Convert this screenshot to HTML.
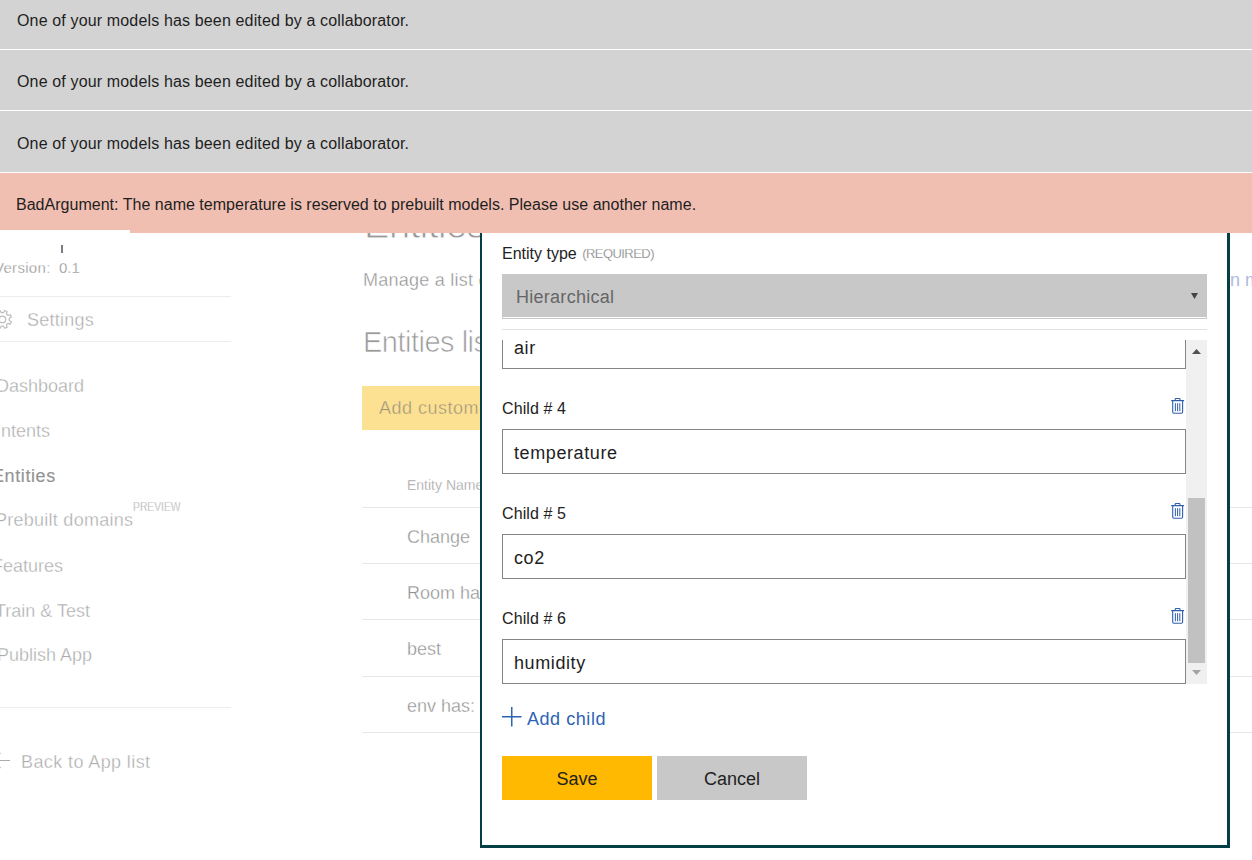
<!DOCTYPE html>
<html><head><meta charset="utf-8">
<style>
*{box-sizing:border-box;margin:0;padding:0}
html,body{width:1252px;height:860px;overflow:hidden;background:#fff;position:relative;font-family:"Liberation Sans",sans-serif}
.a{position:absolute}
.t{position:absolute;white-space:nowrap;line-height:1}
.ln{position:absolute;height:1px;background:#e6e6e6}
.bar{position:absolute;left:0;width:1252px;background:#d3d3d3}
.nt{font-size:16px;color:#1e1e1e}
.sb{font-size:18px;color:#aaa;-webkit-text-stroke:0.35px #fff}
.mc{font-size:18px;color:#8f8f8f;-webkit-text-stroke:0.35px #fff}
.lbl{font-size:16px;color:#222}
.inp{position:absolute;left:502px;width:684px;height:45px;border:1px solid #858585;background:#fff}
.itx{font-size:18px;color:#1e1e1e;letter-spacing:0.6px}
</style></head><body>

<!-- sidebar -->
<div class="a" style="left:61px;top:245px;width:2px;height:8px;background:#7c7c86"></div>
<div class="t" style="left:-6px;top:260px;font-size:15px;color:#8f8f8f;letter-spacing:0.3px;-webkit-text-stroke:0.3px #fff">Version:</div>
<div class="t" style="left:59px;top:260px;font-size:15px;color:#8f8f8f;-webkit-text-stroke:0.3px #fff">0.1</div>
<div class="ln" style="left:0;top:296px;width:231px;background:#ececec"></div>
<svg class="a" style="left:-8px;top:309px" width="22" height="22" viewBox="0 0 22 22"><path fill="none" stroke="#bdbdbd" stroke-width="1.2" stroke-linejoin="round" d="M17.21 11.54 L19.31 12.70 L18.33 15.07 L16.02 14.41 L14.41 16.02 L15.07 18.33 L12.70 19.31 L11.54 17.21 L9.26 17.21 L8.10 19.31 L5.73 18.33 L6.39 16.02 L4.78 14.41 L2.47 15.07 L1.49 12.70 L3.59 11.54 L3.59 9.26 L1.49 8.10 L2.47 5.73 L4.78 6.39 L6.39 4.78 L5.73 2.47 L8.10 1.49 L9.26 3.59 L11.54 3.59 L12.70 1.49 L15.07 2.47 L14.41 4.78 L16.02 6.39 L18.33 5.73 L19.31 8.10 L17.21 9.26Z"/><circle cx="10.4" cy="10.4" r="3.3" fill="none" stroke="#bdbdbd" stroke-width="1.2"/></svg>
<div class="t sb" style="left:27px;top:311px;letter-spacing:0.25px">Settings</div>
<div class="ln" style="left:0;top:341px;width:231px;background:#ececec"></div>
<div class="t sb" style="left:-4px;top:377px">Dashboard</div>
<div class="t sb" style="left:-4px;top:422px">Intents</div>
<div class="t sb" style="left:-8px;top:467px;color:#939393;letter-spacing:0.6px;-webkit-text-stroke:0.15px #939393">Entities</div>
<div class="t sb" style="left:-5px;top:511px;letter-spacing:0.26px">Prebuilt domains</div>
<div class="t" style="left:133px;top:501px;font-size:12px;color:#a6a6a6;-webkit-text-stroke:0.3px #fff;transform:scaleX(0.86);transform-origin:0 0">PREVIEW</div>
<div class="t sb" style="left:-8px;top:557px">Features</div>
<div class="t sb" style="left:-5px;top:602px">Train &amp; Test</div>
<div class="t sb" style="left:-3px;top:646px">Publish App</div>
<div class="ln" style="left:0;top:707px;width:231px;background:#ececec"></div>
<svg class="a" style="left:-10px;top:750px" width="22" height="20" viewBox="0 0 22 20"><path d="M3 10.5H20M10.5 3L3 10.5l7.5 7.5" fill="none" stroke="#ababab" stroke-width="1.1"/></svg>
<div class="t sb" style="left:21px;top:753px;letter-spacing:0.4px">Back to App list</div>

<!-- main content -->
<div class="t" style="left:364px;top:206px;font-size:38px;color:#999;letter-spacing:-0.4px;-webkit-text-stroke:0.8px #fff">Entities</div>
<div class="t mc" style="left:363px;top:271px;letter-spacing:0.25px">Manage a list of entities for your application.</div>
<div class="t" style="left:363px;top:328px;font-size:29px;color:#999;letter-spacing:-0.5px;-webkit-text-stroke:0.7px #fff">Entities list</div>
<div class="a" style="left:362px;top:386px;width:200px;height:44px;background:#fde193"></div>
<div class="t" style="left:379px;top:399px;font-size:18px;color:#9c937c;letter-spacing:0.5px;-webkit-text-stroke:0.35px #fde193">Add custom entity</div>
<div class="t" style="left:407px;top:478px;font-size:14px;color:#999;-webkit-text-stroke:0.3px #fff">Entity Name</div>
<div class="ln" style="left:362px;top:507px;width:890px"></div>
<div class="t mc" style="left:407px;top:528px">Change</div>
<div class="ln" style="left:362px;top:563px;width:890px"></div>
<div class="t mc" style="left:407px;top:584px">Room has</div>
<div class="ln" style="left:362px;top:619px;width:890px"></div>
<div class="t mc" style="left:407px;top:640px">best</div>
<div class="ln" style="left:362px;top:676px;width:890px"></div>
<div class="t mc" style="left:407px;top:697px">env has:</div>
<div class="ln" style="left:362px;top:732px;width:890px"></div>

<!-- modal -->
<div class="a" style="left:480px;top:100px;width:750px;height:748px;background:#fff;border:3px solid #033f45;border-left-width:2px"></div>
<div class="t lbl" style="left:502px;top:246px">Entity type <span style="font-size:13px;color:#7a7a7a;margin-left:1px;letter-spacing:-0.55px;vertical-align:1px;-webkit-text-stroke:0.25px #fff">(REQUIRED)</span></div>
<div class="a" style="left:502px;top:274px;width:705px;height:45px;background:#c8c8c8"></div>
<div class="a" style="left:503px;top:317px;width:703px;height:1px;background:#fff"></div>
<div class="t" style="left:516px;top:288px;font-size:18px;color:#666;letter-spacing:0.27px">Hierarchical</div>
<svg class="a" style="left:1190px;top:292px" width="10" height="9"><path d="M1 1h7l-3.5 6z" fill="#444"/></svg>
<div class="ln" style="left:502px;top:329px;width:705px;background:#e2e2e2"></div>

<!-- scroll area -->
<div class="a" style="left:502px;top:340px;width:705px;height:344px;overflow:hidden">
  <div class="inp" style="left:0;top:-16px"></div>
  <div class="t itx" style="left:12px;top:-1px">air</div>
  <div class="t lbl" style="left:0;top:61px;letter-spacing:0.1px">Child # 4</div>
  <div class="inp" style="left:0;top:89px"></div>
  <div class="t itx" style="left:12px;top:104px">temperature</div>
  <div class="t lbl" style="left:0;top:166px;letter-spacing:0.1px">Child # 5</div>
  <div class="inp" style="left:0;top:194px"></div>
  <div class="t itx" style="left:12px;top:209px">co2</div>
  <div class="t lbl" style="left:0;top:271px;letter-spacing:0.1px">Child # 6</div>
  <div class="inp" style="left:0;top:299px"></div>
  <div class="t itx" style="left:12px;top:314px">humidity</div>
  <!-- scrollbar -->
  <div class="a" style="left:684px;top:0;width:21px;height:344px;background:#f0f0f0"></div>
  <div class="a" style="left:686px;top:158px;width:17px;height:165px;background:#c1c1c1"></div>
  <svg class="a" style="left:689px;top:8px" width="11" height="7"><path d="M1 6h9l-4.5-5z" fill="#505050"/></svg>
  <svg class="a" style="left:689px;top:329px" width="11" height="7"><path d="M1 1h9l-4.5 5z" fill="#a3a3a3"/></svg>
</div>

<!-- trash icons -->
<svg class="a" style="left:1170px;top:397px" width="15" height="17" viewBox="0 0 15 17"><g fill="none" stroke="#2d5fab" stroke-width="1.1"><path d="M1.2 3.6h12.9M5.2 3.6V2.3q0-.8.8-.8h3.2q.8 0 .8.8v1.3M2.7 3.6V15q0 1.2 1.2 1.2h7.5q1.2 0 1.2-1.2V3.6"/><path d="M5.4 6.2v8M7.6 6.2v8M9.8 6.2v8" stroke-width="1"/></g></svg>
<svg class="a" style="left:1170px;top:502px" width="15" height="17" viewBox="0 0 15 17"><g fill="none" stroke="#2d5fab" stroke-width="1.1"><path d="M1.2 3.6h12.9M5.2 3.6V2.3q0-.8.8-.8h3.2q.8 0 .8.8v1.3M2.7 3.6V15q0 1.2 1.2 1.2h7.5q1.2 0 1.2-1.2V3.6"/><path d="M5.4 6.2v8M7.6 6.2v8M9.8 6.2v8" stroke-width="1"/></g></svg>
<svg class="a" style="left:1170px;top:607px" width="15" height="17" viewBox="0 0 15 17"><g fill="none" stroke="#2d5fab" stroke-width="1.1"><path d="M1.2 3.6h12.9M5.2 3.6V2.3q0-.8.8-.8h3.2q.8 0 .8.8v1.3M2.7 3.6V15q0 1.2 1.2 1.2h7.5q1.2 0 1.2-1.2V3.6"/><path d="M5.4 6.2v8M7.6 6.2v8M9.8 6.2v8" stroke-width="1"/></g></svg>

<!-- add child -->
<svg class="a" style="left:502px;top:707px" width="20" height="20"><path d="M9.75 0v19.5M0 9.75h19.5" stroke="#2d63b3" stroke-width="1.5"/></svg>
<div class="t" style="left:527px;top:710px;font-size:18px;color:#2d63b3;letter-spacing:0.55px">Add child</div>
<div class="a" style="left:502px;top:756px;width:150px;height:44px;background:#ffb900"></div>
<div class="t" style="left:502px;top:770px;width:150px;text-align:center;font-size:18px;color:#222">Save</div>
<div class="a" style="left:657px;top:756px;width:150px;height:44px;background:#c8c8c8"></div>
<div class="t" style="left:657px;top:770px;width:150px;text-align:center;font-size:18px;color:#222">Cancel</div>

<div class="t" style="left:1230px;top:271px;font-size:18px;color:#adbade">n more</div>
<!-- notifications -->
<div class="a" style="left:0;top:0;width:1252px;height:230px;background:#fff"></div>
<div class="bar" style="top:-12px;height:61px"></div>
<div class="t nt" style="left:17px;letter-spacing:0.15px;top:13px">One of your models has been edited by a collaborator.</div>
<div class="bar" style="top:50px;height:60px"></div>
<div class="t nt" style="left:17px;letter-spacing:0.15px;top:74px">One of your models has been edited by a collaborator.</div>
<div class="bar" style="top:111px;height:61px"></div>
<div class="t nt" style="left:17px;letter-spacing:0.15px;top:136px">One of your models has been edited by a collaborator.</div>
<div class="bar" style="top:173px;height:57px;background:#f1bfb2"></div>
<div class="a" style="left:130px;top:230px;width:1122px;height:3px;background:#f1bfb2"></div>
<div class="t nt" style="left:16px;letter-spacing:0.02px;top:197px">BadArgument: The name temperature is reserved to prebuilt models. Please use another name.</div>

</body></html>
